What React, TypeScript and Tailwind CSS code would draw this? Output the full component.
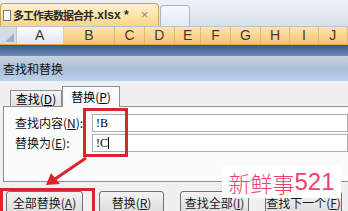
import React from "react";

const cjk = { fontFamily: '"Noto Sans CJK SC", sans-serif' };

function ColHead({ label, w, sel }: { label: string; w: string; sel?: boolean }) {
  return (
    <div
      className={`${w} h-full flex items-center justify-center border-r text-[14px] ${
        sel
          ? "bg-gradient-to-b from-[#fbe4ad] to-[#f5c675] border-[#e6b86a] text-[#4a3a24]"
          : "bg-gradient-to-b from-[#fbfcfd] to-[#e3e8ef] border-[#c5cfdb] text-[#3a3a3a]"
      }`}
      style={{ fontFamily: '"Liberation Sans", sans-serif' }}
    >
      {label}
    </div>
  );
}

function Btn({ children, w }: { children: React.ReactNode; w: string }) {
  return (
    <div
      className={`${w} h-[24px] shrink-0 rounded-[3px] border border-[#707070] bg-gradient-to-b from-[#f3f3f3] to-[#dcdcdc] flex items-center justify-center text-[12px] text-[#1a1a1a]`}
      style={cjk}
    >
      {children}
    </div>
  );
}

export default function App() {
  return (
    <div className="relative w-[348px] h-[211px] overflow-hidden flex flex-col bg-[#f0f0f0]">
      {/* workbook tabs */}
      <div className="h-[27px] shrink-0 flex items-end bg-gradient-to-b from-[#eef2f7] to-[#d6e0ec] border-b border-[#b7c4d4]">
        <div className="w-[159px] h-[23px] rounded-t-[4px] border border-b-0 border-[#c9a45c] bg-gradient-to-b from-[#fff2c9] to-[#fad58a] flex items-center pl-[2px]">
          <div className="w-[8px] h-[11px] border border-[#6b7c94] bg-white mr-[2px]" />
          <span className="text-[11px] font-bold tracking-[-1px] text-[#2b2b2b]" style={cjk}>
            多工作表数据合并
          </span>
          <span className="text-[12px] font-bold text-[#2b2b2b] ml-[1px]" style={{ fontFamily: '"Liberation Sans", sans-serif' }}>
            .xlsx *
          </span>
          <span className="ml-[12px] text-[13px] text-[#8a8a8a]" style={{ fontFamily: '"Liberation Sans", sans-serif' }}>
            ×
          </span>
        </div>
        <div className="w-[30px] h-[21px] ml-[1px] rounded-t-[4px] border border-b-0 border-[#a9b7c9] bg-gradient-to-b from-[#f7f9fc] to-[#e4eaf2]" />
      </div>

      {/* column headers */}
      <div className="h-[18px] shrink-0 flex border-b border-[#e2a64a]">
        <div className="w-[17px] h-full bg-[#d3dde9] border-r border-[#b9c6d6] relative">
          <div className="absolute right-[2px] bottom-[2px] w-0 h-0 border-l-[9px] border-l-transparent border-b-[9px] border-b-[#9fb2ca]" />
        </div>
        <ColHead label="A" w="w-[48px]" />
        <ColHead label="B" w="w-[53px]" sel />
        <ColHead label="C" w="w-[30px]" sel />
        <ColHead label="D" w="w-[31px]" sel />
        <ColHead label="E" w="w-[27px]" sel />
        <ColHead label="F" w="w-[30px]" sel />
        <ColHead label="G" w="w-[31px]" sel />
        <ColHead label="H" w="w-[30px]" sel />
        <ColHead label="I" w="w-[29px]" sel />
        <ColHead label="J" w="w-[30px]" sel />
      </div>

      {/* selected cells band */}
      <div className="h-[11px] shrink-0 bg-gradient-to-b from-[#37598a] to-[#6d8dba]" />

      {/* dialog title */}
      <div className="h-[26px] shrink-0 bg-gradient-to-b from-[#c9d3df] via-[#a9bed7] to-[#bcd3ec] flex items-center pl-[3px] border-b border-[#e8eef5]">
        <span className="text-[12px] text-[#111]" style={cjk}>
          查找和替换
        </span>
      </div>

      {/* dialog body */}
      <div className="flex-1 pl-[3px] flex flex-col">
        <div className="h-[24px] flex items-end pl-[7px]">
          <div className="w-[52px] h-[16px] border border-b-0 border-[#8e8f8f] bg-gradient-to-b from-[#f3f3f3] to-[#e2e2e2] flex items-center justify-center text-[12px]" style={cjk}>
            查找(<u>D</u>)
          </div>
          <div className="w-[58px] h-[21px] border border-b-0 border-[#8e8f8f] bg-[#fbfbfb] flex items-center justify-center text-[12px] -mb-px relative z-10" style={cjk}>
            替换(<u>P</u>)
          </div>
        </div>
        <div className="h-[76px] border-t border-l border-b border-[#8e8f8f] bg-[#fbfbfb] flex flex-col gap-[2px] pt-[7px] pl-[11px]">
          <div className="flex items-center h-[18px]">
            <span className="w-[77px] text-[12px] text-[#111]" style={cjk}>
              查找内容(<u>N</u>):
            </span>
            <div className="flex-1 h-[18px] border border-[#abadb3] bg-white flex items-center pl-[3px] text-[12px]" style={{ fontFamily: '"Liberation Serif", serif' }}>
              !B
            </div>
          </div>
          <div className="flex items-center h-[18px]">
            <span className="w-[77px] text-[12px] text-[#111]" style={cjk}>
              替换为(<u>E</u>):
            </span>
            <div className="flex-1 h-[18px] border border-[#abadb3] bg-white flex items-center pl-[3px] text-[12px]" style={{ fontFamily: '"Liberation Serif", serif' }}>
              !C<span className="w-px h-[12px] bg-black" />
            </div>
          </div>
        </div>
        <div className="flex gap-[16px] pl-[3px] mt-[9px]">
          <Btn w="w-[77px]">全部替换(<u>A</u>)</Btn>
          <Btn w="w-[65px]">替换(<u>R</u>)</Btn>
          <Btn w="w-[69px]">查找全部(<u>I</u>)</Btn>
          <Btn w="w-[77px]">查找下一个(<u>F</u>)</Btn>
        </div>
      </div>

      {/* annotations */}
      <div className="absolute left-[83px] top-[108px] w-[45px] h-[49px] border-[3px] border-[#d8262b]" />
      <div className="absolute left-0 top-[188px] w-[95px] h-[30px] border-[3px] border-[#d8262b]" />
      <svg className="absolute left-0 top-0" width="348" height="211">
        <line x1="86" y1="158" x2="55" y2="179" stroke="#d8262b" strokeWidth="3" />
        <polygon points="46,185 51,173 60,184" fill="#d8262b" />
      </svg>

      {/* watermark */}
      <div className="absolute left-[222px] top-[166px] w-[119px] h-[32px] bg-white flex items-center justify-center">
        <span className="text-[22px] font-light text-[#ee3f6f]" style={cjk}>
          新鲜事
        </span>
        <span className="text-[24px] text-[#ee3f6f]" style={{ fontFamily: '"Liberation Sans", sans-serif' }}>
          521
        </span>
      </div>
    </div>
  );
}
